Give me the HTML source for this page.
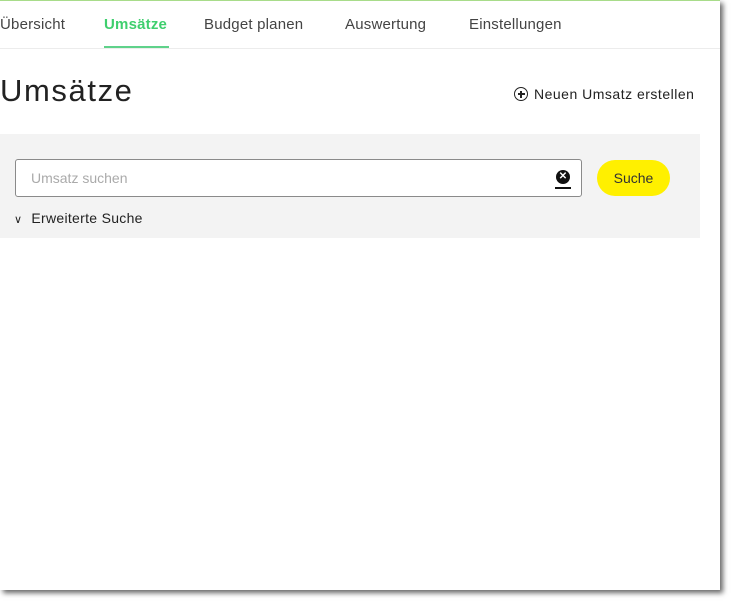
<!DOCTYPE html>
<html><head><meta charset="utf-8"><style>
body{margin:0;width:736px;height:605px;background:#fff;font-family:"Liberation Sans",sans-serif;position:relative;overflow:hidden}
.page{position:absolute;left:0;top:0;width:720px;height:590px;background:#fff;box-shadow:3px 3px 5px rgba(0,0,0,.6);border-top:1px solid #a8dc8a;box-sizing:border-box}
.nav{position:absolute;top:0;left:0;width:720px;height:47px;border-bottom:1px solid #ececec}
.nav span{position:absolute;top:15px;font-size:15px;color:#444;letter-spacing:.2px}
.nav .act{color:#3fcf6e;font-weight:bold}
.nav .ul{position:absolute;left:104px;top:45px;width:65px;height:2px;background:#5fd28a}
h1{position:absolute;left:0;top:72px;margin:0;font-weight:normal;font-size:31px;color:#222;letter-spacing:1.6px}
.new{position:absolute;left:514px;top:85px;font-size:14px;color:#222;letter-spacing:.5px}
.new i{display:inline-block;width:12px;height:12px;border:1.5px solid #222;border-radius:50%;vertical-align:-2px;margin-right:6px;position:relative;font-style:normal}
.new i:before{content:"";position:absolute;left:2.5px;top:5.25px;width:7px;height:1.5px;background:#222}
.new i:after{content:"";position:absolute;left:5.25px;top:2.5px;width:1.5px;height:7px;background:#222}
.panel{position:absolute;left:0;top:133px;width:700px;height:104px;background:#f3f3f3}
.inp{position:absolute;left:15px;top:25px;width:565px;height:36px;background:#fff;border:1px solid #8a8a8a;border-radius:3px}
.inp span{position:absolute;left:15px;top:10px;font-size:14px;color:#aaa}
.x{position:absolute;left:540px;top:10px;width:14px;height:14px;background:#111;border-radius:50%;color:#fff;font-size:10px;font-weight:bold;text-align:center;line-height:14px}
.xu{position:absolute;left:539px;top:27px;width:16px;height:1.5px;background:#111}
.btn{position:absolute;left:597px;top:26px;width:73px;height:36px;background:#fff000;border-radius:18px;font-size:14px;color:#333;text-align:center;line-height:36px}
.adv{position:absolute;left:14px;top:76px;font-size:14px;color:#222;letter-spacing:.3px}
</style></head><body>
<div class="page">
<div class="nav">
<span style="left:0">Übersicht</span>
<span class="act" style="left:104px">Umsätze</span>
<span style="left:204px">Budget planen</span>
<span style="left:345px">Auswertung</span>
<span style="left:469px">Einstellungen</span>
<div class="ul"></div>
</div>
<h1>Umsätze</h1>
<div class="new"><i></i>Neuen Umsatz erstellen</div>
<div class="panel">
<div class="inp"><span>Umsatz suchen</span><div class="x">✕</div><div class="xu"></div></div>
<div class="btn">Suche</div>
<div class="adv"><span style="font-size:11px;margin-right:9px">∨</span>Erweiterte Suche</div>
</div>
</div>
</body></html>
